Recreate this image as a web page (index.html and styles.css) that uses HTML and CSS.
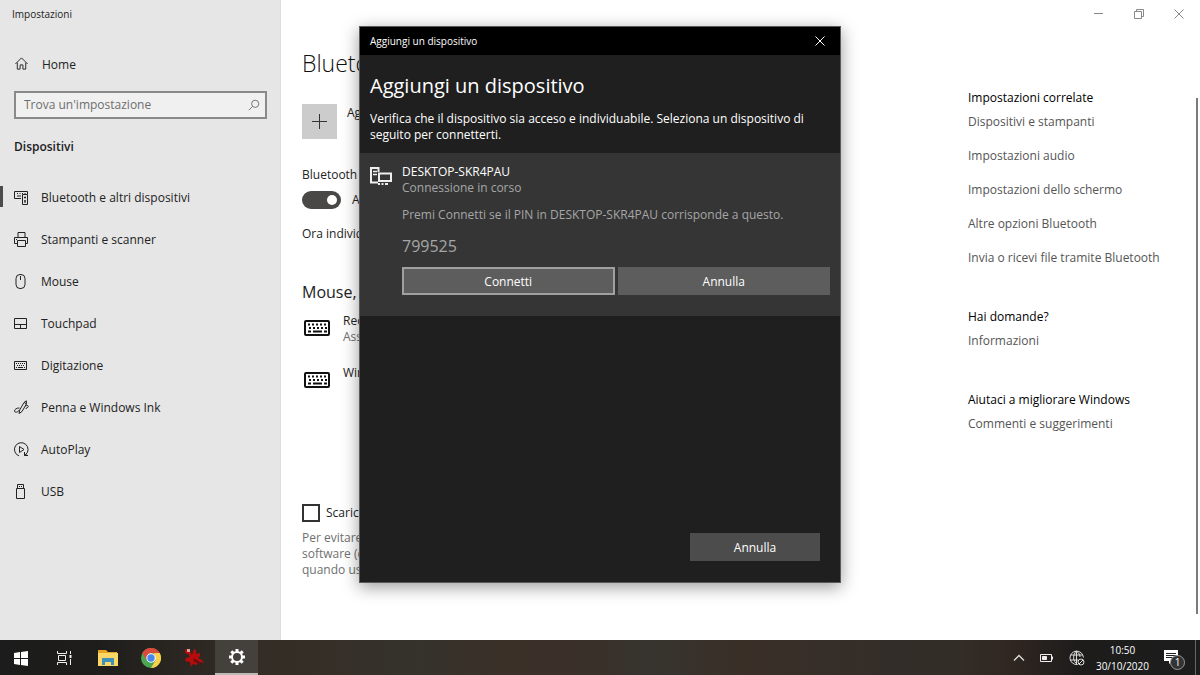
FILE: index.html
```html
<!DOCTYPE html>
<html lang="it">
<head>
<meta charset="utf-8">
<meta name="viewport" content="width=device-width, initial-scale=1">
<title>Impostazioni</title>
<link rel="stylesheet" href="styles.css">
</head>
<body>
<div class="desktop">
  <div class="window">
    <nav class="sidebar">
      <div class="window-title">Impostazioni</div>
      <a class="home" href="#">
        <svg class="icon" viewBox="0 0 16 16"><path d="M1.500 8.500 8 2l6.500 6.500M3.500 7v7h3V9.500h3V14h3V7"/></svg>
        <span>Home</span>
      </a>
      <label class="search">
        <input type="text" placeholder="Trova un'impostazione" aria-label="Trova un'impostazione">
        <svg class="search-icon" viewBox="0 0 12 12"><circle cx="7.200" cy="4.800" r="3.600"/><path d="M4.600 7.400.8 11.200"/></svg>
      </label>
      <h2 class="section">Dispositivi</h2>
      <ul class="nav">
        <li><a class="nav-item active" href="#">
          <svg class="icon" viewBox="0 0 15 15"><path d="M7 8.500H.5v-7h13V4M3 3.500h1M5.500 3.500h1M8 3.500h1M10.500 3.500h1M3 6h4M8.500 4.500h5v10h-5zM10 7.500h2M11 6.500v2M10 11h2M11 10v3"/></svg>
          <span>Bluetooth e altri dispositivi</span></a></li>
        <li><a class="nav-item" href="#">
          <svg class="icon" viewBox="0 0 15 15"><path d="M4 5.500v-5h7v5M3.500 11.500h-3v-6h13v6h-2M3.500 8.500h8v6h-8zM2 7.500h1"/></svg>
          <span>Stampanti e scanner</span></a></li>
        <li><a class="nav-item" href="#">
          <svg class="icon" viewBox="0 0 15 15"><rect x="2" y=".5" width="9" height="14" rx="4"/><path d="M6.500 2v4"/></svg>
          <span>Mouse</span></a></li>
        <li><a class="nav-item" href="#">
          <svg class="icon" viewBox="0 0 15 15"><path d="M.5 2.500h12v10H.5zM.5 8.500h12M6.500 8.500v4"/></svg>
          <span>Touchpad</span></a></li>
        <li><a class="nav-item" href="#">
          <svg class="icon" viewBox="0 0 15 15"><path d="M.5 3.500h12v8H.5z"/><path stroke-dasharray="1 1" d="M2 5.500h9M3 7.500h8M2 9.500h2M10 9.500h1"/><path d="M4 9.500h5"/></svg>
          <span>Digitazione</span></a></li>
        <li><a class="nav-item" href="#">
          <svg class="icon" viewBox="0 0 15 15"><path d="M5 13.500 5.700 10 10 2.500l2.300-1.700.2 3L8 11.500zM10 2.500l2.500 1.300M5.500 8C2.500 7.800.5 9.500.5 11s2.200 2 4.500-.5M11.500 6C13 5 14.300 5.500 14.300 6.500S12 8 11.500 9"/></svg>
          <span>Penna e Windows Ink</span></a></li>
        <li><a class="nav-item" href="#">
          <svg class="icon" viewBox="0 0 15 15"><path d="M5 13.900A6.800 6.800 0 1 1 11.500 12.800M5.500 4.500v6l4.500-3zM10.500 10v3.500H14M10.500 13.500l2.500-2"/></svg>
          <span>AutoPlay</span></a></li>
        <li><a class="nav-item" href="#">
          <svg class="icon" viewBox="0 0 15 15"><path d="M2.500 4.500h8v10h-8zM3.500 4.500v-4h6v4M5 2.500h1M7 2.500h1"/></svg>
          <span>USB</span></a></li>
      </ul>
    </nav>

    <main class="content">
      <section class="settings">
        <h1>Bluetooth</h1>
        <button class="add" type="button">
          <span class="add-tile"><svg viewBox="0 0 16 16"><path d="M7.500 0v15M0 7.500h15"/></svg></span>
          <span>Aggiungi</span>
        </button>
        <div class="label" id="bt">Bluetooth</div>
        <label class="toggle"><input type="checkbox" checked aria-labelledby="bt"><span>Attivato</span></label>
        <p class="discoverable">Ora individuabile</p>
        <h2>Mouse, tastiera e penna</h2>
        <ul class="devices">
          <li>
            <svg class="keyboard" viewBox="0 0 26 16"><rect x="1" y="1" width="24" height="14" rx="1"/><path stroke-dasharray="2 2" d="M4 4.500h19M5 8h18"/><path d="M4 11.500h3M9 11.500h9M20 11.500h3"/></svg>
            <div><div>Receiver</div><div class="muted">Assente</div></div>
          </li>
          <li>
            <svg class="keyboard" viewBox="0 0 26 16"><rect x="1" y="1" width="24" height="14" rx="1"/><path stroke-dasharray="2 2" d="M4 4.500h19M5 8h18"/><path d="M4 11.500h3M9 11.500h9M20 11.500h3"/></svg>
            <div><div>Windows</div></div>
          </li>
        </ul>
        <label class="metered"><input type="checkbox"><span>Scarica tramite connessioni a consumo</span></label>
        <p class="note">Per evitare costi aggiuntivi, disattiva il download del<br>software (driver, informazioni e app) per i dispositivi<br>quando usi connessioni a consumo.</p>
      </section>

      <aside class="related">
        <div class="caption-buttons">
          <button type="button" aria-label="Riduci a icona"><svg viewBox="0 0 10 10"><path d="M0 4.500h9"/></svg></button>
          <button type="button" aria-label="Ripristina"><svg viewBox="0 0 10 10"><path d="M.5 2.500h7v7h-7zM2.500 2.500v-2h7v7h-2"/></svg></button>
          <button type="button" aria-label="Chiudi"><svg viewBox="0 0 10 10"><path d="m.5.5 9 9M9.500.5l-9 9"/></svg></button>
        </div>
        <div class="related-body">
          <div class="groups">
            <section>
              <h3>Impostazioni correlate</h3>
              <a href="#">Dispositivi e stampanti</a>
              <a href="#">Impostazioni audio</a>
              <a href="#">Impostazioni dello schermo</a>
              <a href="#">Altre opzioni Bluetooth</a>
              <a href="#">Invia o ricevi file tramite Bluetooth</a>
            </section>
            <section>
              <h3>Hai domande?</h3>
              <a href="#">Informazioni</a>
            </section>
            <section>
              <h3>Aiutaci a migliorare Windows</h3>
              <a href="#">Commenti e suggerimenti</a>
            </section>
          </div>
          <div class="scrollbar"></div>
        </div>
      </aside>
    </main>

    <div class="overlay">
      <div class="dialog" role="dialog" aria-labelledby="dlg-title">
        <header class="dialog-bar">
          <span>Aggiungi un dispositivo</span>
          <button type="button" aria-label="Chiudi"><svg viewBox="0 0 10 10"><path d="m.5.5 9 9M9.500.5l-9 9"/></svg></button>
        </header>
        <div class="dialog-intro">
          <h2 id="dlg-title">Aggiungi un dispositivo</h2>
          <p>Verifica che il dispositivo sia acceso e individuabile. Seleziona un dispositivo di seguito per connetterti.</p>
        </div>
        <div class="pairing">
          <svg class="pc" viewBox="0 0 22 18"><path d="M8 15.500H1V1h7.500v4"/><path stroke-width="1.300" d="M3 4.500h4M3 7.500h4"/><path d="M9 12V6.500h12V14H9zM8 17h2M11.500 17h2M15 17h3"/></svg>
          <div class="pairing-body">
            <div class="device-name">DESKTOP-SKR4PAU</div>
            <div class="status">Connessione in corso</div>
            <div class="prompt">Premi Connetti se il PIN in DESKTOP-SKR4PAU corrisponde a questo.</div>
            <div class="pin">799525</div>
            <div class="actions">
              <button class="btn primary" type="button">Connetti</button>
              <button class="btn" type="button">Annulla</button>
            </div>
          </div>
        </div>
        <footer class="dialog-footer"><button class="btn cancel" type="button">Annulla</button></footer>
      </div>
    </div>
  </div>

  <footer class="taskbar">
    <div class="apps">
      <button type="button" aria-label="Start"><svg width="16" height="16" viewBox="0 0 16 16"><path fill="#fff" d="M0 3l6-1v6H0zM7 2l7-1v7H7zM0 9h6v6l-6-1zM7 9h7v7l-7-1z"/></svg></button>
      <button type="button" aria-label="Visualizzazione attività"><svg width="16" height="16" viewBox="0 0 16 16" fill="none" stroke="#eee"><path d="M.5 1v2.500h9V1M.5 15v-2.500h9V15M1.500 5.500h7v5h-7zM13.500 1v3M13.500 9v6"/><path stroke-width="2" d="M13.500 5v3"/></svg></button>
      <button type="button" aria-label="Esplora file"><svg width="20" height="18" viewBox="0 0 20 18"><path fill="#e8a522" d="M0 1h8l2 2h9v4H0z"/><path fill="#fbd866" d="M0 4h20v13H0z"/><path fill="#3e91b8" d="M4 9h12v7h-3v-3H7v3H4z"/></svg></button>
      <button type="button" aria-label="Chrome"><svg width="20" height="20" viewBox="0 0 20 20"><circle cx="10" cy="10" r="10" fill="#4aa651"/><path fill="#d94a3c" d="M1.300 5A10 10 0 0 1 18.700 5H10l-4.300 7.500z"/><path fill="#f8d04c" d="M18.700 5A10 10 0 0 1 10 20l4.300-7.500L13 5z"/><circle cx="10" cy="10" r="4.700" fill="#fff"/><circle cx="10" cy="10" r="3.700" fill="#4587ed"/></svg></button>
      <button type="button" aria-label="Irfan"><svg width="20" height="20" viewBox="0 0 20 20"><path fill="#b70c0e" d="M1 2c2-2 5-1 5 1l2 4 2-6 2 1v4l4-1v3l-2 2 4 2 2 3-4-1-2-1-1 4-4-1-2 3-1-5-5-1 1-3 4-1-2-3-3-1z"/><path fill="#d5a6a0" d="M3 1h3v3H3z"/><path fill="#700b0d" d="m9 10 4 2 6 5-5-2-4-1z"/></svg></button>
      <button class="current" type="button" aria-label="Impostazioni"><svg width="18" height="18" viewBox="0 0 18 18" fill="none" stroke="#fff"><circle cx="9" cy="9" r="5" stroke-width="2"/><path stroke-width="3" d="M9 1v3M9 14v3M1 9h3M14 9h3M3.300 3.300l2.100 2.100M12.600 12.600l2.100 2.100M14.700 3.300l-2.100 2.100M5.400 12.600l-2.100 2.100"/></svg></button>
    </div>
    <div class="tray">
      <svg width="12" height="8" viewBox="0 0 12 8" fill="none" stroke="#ddd" stroke-width="1.300"><path d="m1 6.500 5-5 5 5"/></svg>
      <svg width="14" height="8" viewBox="0 0 14 8" fill="none" stroke="#eee"><path d="M.5.5h11v7H.5z"/><path fill="#eee" d="M2.500 2.500h4v3h-4zM12.500 2.500v3"/></svg>
      <svg width="16" height="16" viewBox="0 0 16 16" fill="none" stroke="#ddd"><path d="M8.500 14.500A6.700 6.700 0 1 1 14.400 7.500M8.500 14.500C3.500 11 3.500 5 7.500 1c2.500 2 3.500 4 3.500 6M1.500 5h12M1 10h8M7.500 1v13"/><circle cx="12" cy="12" r="3"/><path d="m10 14 4-4"/></svg>
      <div class="clock"><time>10:50</time><time>30/10/2020</time></div>
      <div class="notify">
        <svg width="16" height="15" viewBox="0 0 16 15"><path fill="#fff" d="M0 0h14v11H8l-3 3v-3H0z"/><path stroke="#222" d="M2 3.500h10M2 5.500h10M2 7.500h7"/></svg>
        <span class="badge">1</span>
      </div>
      <div class="peek"></div>
    </div>
  </footer>
</div>
</body>
</html>
```
FILE: styles.css
```css
* { box-sizing: border-box; }
body, h1, h2, h3, p, ul { margin: 0; padding: 0; }
ul { list-style: none; }
a { color: inherit; text-decoration: none; }
button, input { font: inherit; color: inherit; }
button { padding: 0; border: 0; background: none; }
svg { display: block; flex: none; }

body {
  font-family: "Open Sans", "Noto Sans", sans-serif;
  font-size: 12px;
  line-height: 16px;
  color: #222;
}
.desktop { display: flex; flex-direction: column; min-height: 100vh; }
.window { position: relative; flex: 1; display: flex; background: #fff; }

/* Sidebar */
.sidebar { width: 281px; background: #e6e6e6; border-right: 1px solid #dcdcdc; }
.window-title { padding: 6px 12px; font-size: 10px; }
.home { display: flex; align-items: center; gap: 13px; margin-top: 28px; padding: 0 14px; }
.icon { width: 15px; height: 15px; margin-bottom: 2px; fill: none; stroke: #222; stroke-width: 1; }
.search {
  display: flex; align-items: center;
  height: 28px; margin: 18px 13px 0 14px; padding: 0 5px 0 8px;
  border: 2px solid #8a8a8a; background: #f0f0f0;
}
.search input { flex: 1; min-width: 0; padding: 0; border: 0; outline: 0; background: none; }
.search input::placeholder { color: #6e6e6e; opacity: 1; }
.search-icon { width: 12px; height: 12px; fill: none; stroke: #777; }
.section { margin: 20px 14px 22px; font-size: 12px; font-weight: 600; }
.nav-item { display: flex; align-items: center; gap: 12px; height: 42px; padding-left: 14px; }
.nav-item.active { position: relative; }
.nav-item.active::before {
  content: ""; position: absolute; left: 0; top: 9px; width: 3px; height: 21px; background: #4c4c4c;
}

/* Content */
.content { flex: 1; display: flex; justify-content: space-between; overflow: hidden; }
.settings { width: 400px; padding: 46px 0 0 21px; }
.settings h1 { font-size: 23px; line-height: 34px; font-weight: 300; color: #111; }
.add { display: flex; gap: 10px; margin-top: 24px; padding-top: 1px; text-align: left; }
.add-tile { display: grid; place-items: center; width: 35px; height: 35px; margin-top: -1px; background: #ccc; }
.add-tile svg { width: 16px; height: 16px; stroke: #333; }
.label { margin-top: 28px; }
.toggle { display: flex; align-items: center; gap: 11px; height: 18px; margin-top: 8px; }
.toggle input {
  appearance: none; display: flex; justify-content: flex-end; align-items: center;
  width: 39px; height: 18px; margin: 0; padding: 0 4px; border-radius: 9px; background: #4a4846;
}
.toggle input::before { content: ""; width: 10px; height: 10px; border-radius: 50%; background: #fff; }
.discoverable { margin-top: 17px; }
.settings h2 { margin-top: 38px; font-size: 16px; line-height: 24px; font-weight: 400; }
.devices { display: grid; gap: 20px; margin-top: 9px; }
.devices li { display: flex; gap: 13px; padding-left: 2px; min-height: 32px; }
.keyboard { width: 26px; height: 16px; margin-top: 7px; fill: none; stroke: #111; stroke-width: 2; }
.muted, .note { color: #707070; }
.metered { display: flex; align-items: center; gap: 6px; margin-top: 107px; }
.metered input {
  appearance: none; width: 18px; height: 18px; margin: 0; border: 2px solid #333; background: #fff;
}
.note { margin-top: 8px; white-space: nowrap; }

.related { width: 232px; display: flex; flex-direction: column; }
.caption-buttons { display: flex; justify-content: flex-end; height: 27px; padding-right: 1px; }
.caption-buttons button { width: 40px; display: grid; place-items: center; }
.caption-buttons svg { width: 10px; height: 10px; fill: none; stroke: #888; }
.related-body { flex: 1; display: flex; justify-content: space-between; padding: 63px 2px 26px 0; }
.groups { display: grid; gap: 43px; align-content: start; }
.groups section { display: grid; gap: 18px; }
.groups h3 { margin-bottom: -10px; font-size: 12px; font-weight: 400; color: #000; }
.groups a { color: #555; }
.scrollbar { width: 2px; margin-top: 8px; background: #7a7a7a; }

/* Pairing dialog */
.overlay {
  position: absolute; inset: 0; display: flex; justify-content: center; align-items: flex-start;
  padding-top: 26px;
}
.dialog {
  display: flex; flex-direction: column; width: 482px; min-height: 557px;
  border: 1px solid #5a5a5a; background: #1f1f1f; color: #fff;
  box-shadow: 0 4px 16px rgba(0, 0, 0, .4);
}
.dialog-bar { display: flex; justify-content: space-between; align-items: center; height: 28px; padding: 0 15px 0 10px; background: #000; font-size: 10px; }
.dialog-bar svg { width: 10px; height: 10px; fill: none; stroke: #fff; }
.dialog-intro { padding: 17px 30px 10px 10px; }
.dialog-intro h2 { margin-bottom: 11px; font-size: 20px; line-height: 28px; font-weight: 400; }
.pairing { display: flex; gap: 10px; padding: 11px 10px 21px; background: #353535; }
.pc { width: 22px; height: 18px; margin-top: 3px; fill: none; stroke: #eee; stroke-width: 2; }
.pairing-body { flex: 1; }
.status, .prompt, .pin { color: #a6a6a6; }
.prompt { margin-top: 11px; }
.pin { margin-top: 11px; font-size: 16px; line-height: 24px; }
.actions { display: grid; grid-template-columns: 1fr 1fr; gap: 3px; margin-top: 9px; }
.btn { height: 28px; padding-top: 1px; background: #5d5d5d; }
.btn.primary { border: 2px solid #a0a0a0; }
.dialog-footer { display: flex; justify-content: flex-end; margin-top: auto; padding: 21px 20px; }
.cancel { width: 130px; background: #4c4c4c; }

/* Taskbar */
.taskbar {
  display: flex; justify-content: space-between; height: 35px; color: #fff;
  background: linear-gradient(90deg, #1c1c1c 0, #1e1d1b 8%, #332c25 20%, #352e26 26%, #35322c 34%, #3a3028 42%, #3a302a 50%, #36342f 54%, #392f27 62%, #332d29 75%, #322d26 80%, #302721 84%, #1d1c1b 90%, #1d1d1d 100%);
}
.apps, .tray { display: flex; align-items: center; }
.apps button { display: grid; place-items: center; width: 43px; height: 35px; }
.apps .current { background: #44413d; border-bottom: 2px solid #bdb9b2; }
.tray { gap: 15px; }
.clock { display: grid; margin-left: -4px; text-align: center; font-size: 10px; line-height: 16px; }
.notify { position: relative; }
.badge {
  position: absolute; left: 6px; top: 5px; width: 15px; height: 15px;
  border: 1px solid #999; border-radius: 50%; background: #333;
  font-size: 10px; line-height: 13px; text-align: center;
}
.peek { width: 5px; height: 35px; border-left: 1px solid #666; }
```
